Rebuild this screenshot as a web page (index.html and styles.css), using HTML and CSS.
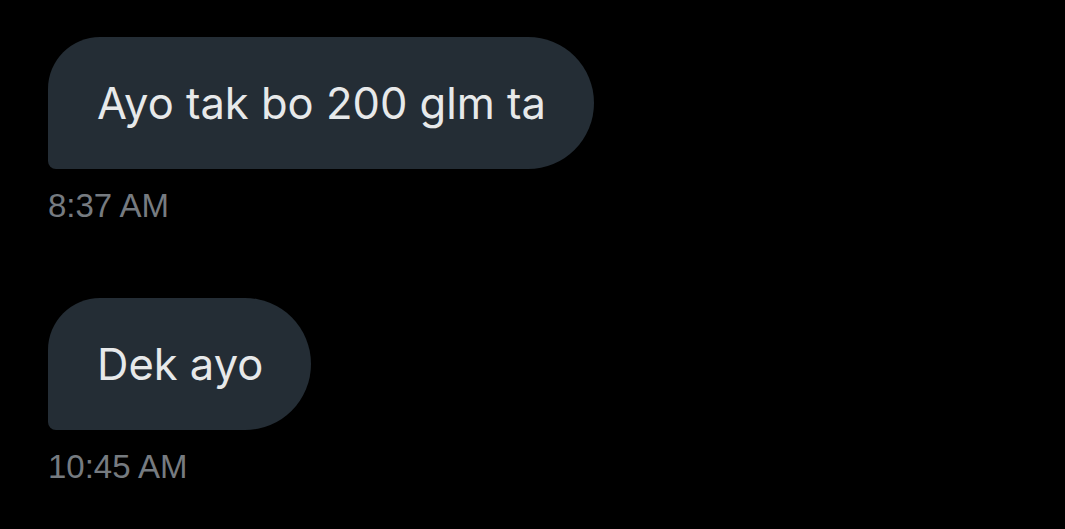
FILE: index.html
```html
<!DOCTYPE html>
<html>
<head>
<meta charset="utf-8">
<link rel="stylesheet" href="styles.css">
</head>
<body>
<div class="thread">
  <div class="msg">
    <div class="bubble">Ayo tak bo 200 glm ta</div>
    <div class="time">8:37 AM</div>
  </div>
  <div class="msg">
    <div class="bubble">Dek ayo</div>
    <div class="time">10:45 AM</div>
  </div>
</div>
</body>
</html>
```

FILE: styles.css
```css
html, body {
  margin: 0;
  background: #000;
  height: 100%;
}
.thread {
  display: flex;
  flex-direction: column;
  gap: 74px;
  padding: 37px 48px;
}
.msg {
  display: flex;
  flex-direction: column;
  align-items: flex-start;
}
.bubble {
  background: #242d35;
  color: #e7e9ea;
  font-family: Inter, "Noto Sans", sans-serif;
  font-size: 43.5px;
  line-height: 52px;
  padding: 40px 48px 40px 49px;
  border-radius: 52px 66px 66px 8px;
}
.time {
  margin-top: 18px;
  color: #767b80;
  font-family: "Liberation Sans", Arial, sans-serif;
  font-size: 33px;
  line-height: 37px;
}
```
